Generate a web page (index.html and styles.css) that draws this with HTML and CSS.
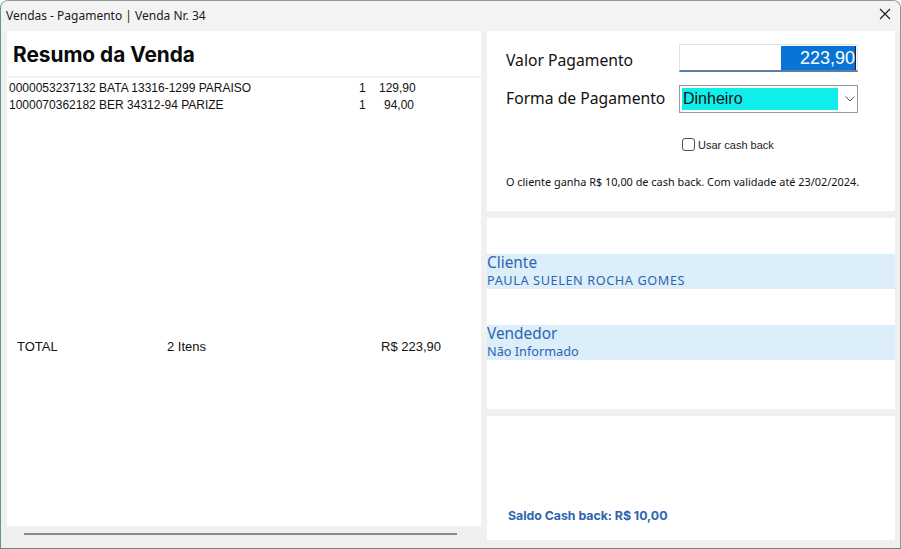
FILE: index.html
```html
<!DOCTYPE html>
<html lang="pt-BR">
<head>
<meta charset="utf-8">
<title>Vendas - Pagamento</title>
<link rel="stylesheet" href="styles.css">
</head>
<body>
<div class="window">
  <div class="titlebar">
    <span class="title">Vendas - Pagamento | Venda Nr. 34</span>
    <svg class="close" width="12" height="12" viewBox="0 0 12 12"><path d="M1 1 L11 11 M11 1 L1 11" stroke="#1a1a1a" stroke-width="1.1" fill="none"/></svg>
  </div>
  <div class="content">
    <div class="left">
      <div class="summary">
        <div class="summary-head">Resumo da Venda</div>
        <div class="items">
          <div class="item"><span class="desc">0000053237132 BATA 13316-1299 PARAISO</span><span class="qty">1</span><span class="price">129,90</span></div>
          <div class="item"><span class="desc">1000070362182 BER 34312-94 PARIZE</span><span class="qty">1</span><span class="price">94,00</span></div>
        </div>
        <div class="total">
          <span class="t-label">TOTAL</span>
          <span class="t-count">2 Itens</span>
          <span class="t-value">R$ 223,90</span>
        </div>
      </div>
      <div class="hscroll"><div class="hbar"></div></div>
    </div>
    <div class="right">
      <div class="card pay">
        <div class="row">
          <span class="lbl lbl-first">Valor Pagamento</span>
          <div class="input"><span class="sel">223,90</span></div>
        </div>
        <div class="row">
          <span class="lbl lbl-second">Forma de Pagamento</span>
          <div class="combo"><span class="combo-val">Dinheiro</span>
            <svg class="chev" width="10" height="6" viewBox="0 0 10 6"><path d="M0.5 0.5 L5 5 L9.5 0.5" stroke="#555" stroke-width="1" fill="none"/></svg>
          </div>
        </div>
        <label class="check"><span class="box"></span>Usar cash back</label>
        <p class="note">O cliente ganha R$ 10,00 de cash back. Com validade até 23/02/2024.</p>
      </div>
      <div class="card people">
        <div class="band"><div class="b-title">Cliente</div><div class="b-value caps">PAULA SUELEN ROCHA GOMES</div></div>
        <div class="band"><div class="b-title">Vendedor</div><div class="b-value">Não Informado</div></div>
      </div>
      <div class="card saldo">
        <span class="saldo-text">Saldo Cash back: R$ 10,00</span>
      </div>
    </div>
  </div>
</div>
</body>
</html>
```
FILE: styles.css
```css
* { box-sizing: border-box; }
html, body { margin: 0; padding: 0; background: #ffffff; }
body { width: 901px; height: 549px; overflow: hidden; font-family: "Noto Sans", "Open Sans", sans-serif; }

.window {
  width: 901px;
  height: 549px;
  background: #f0f0f0;
  border: 1px solid #8d9a96;
  border-left-color: #5f9c86;
  border-bottom-color: #70857f;
  border-top-left-radius: 8px;
  border-top-right-radius: 8px;
  display: flex;
  flex-direction: column;
  overflow: hidden;
}

.titlebar {
  height: 30px;
  flex: none;
  background: #f3f3f3;
  display: flex;
  align-items: center;
  justify-content: space-between;
  padding: 0 9px 1px 5px;
}
.title { font-size: 12px; color: #1a1a1a; }
.close { margin-top: -3px; }

.content {
  flex: 1;
  display: grid;
  grid-template-columns: 474px 408px;
  column-gap: 6px;
  padding: 0 0 8px 6px;
}

.left { display: flex; flex-direction: column; }
.summary {
  height: 495px;
  background: #fff;
  display: flex;
  flex-direction: column;
}
.summary-head {
  height: 47px;
  padding: 11px 0 0 6px;
  font-family: "Inter", "Noto Sans", sans-serif;
  font-weight: 700;
  font-size: 20.8px;
  color: #0a0a0a;
  border-bottom: 2px solid #f0f0f0;
}
.items { padding-top: 1px; height: 258px; }
.item {
  display: flex;
  height: 17px;
  align-items: center;
  font-family: "Liberation Sans", Arial, sans-serif;
  font-size: 12px;
  color: #111;
  padding-left: 2px;
}
.desc { width: 350px; }
.qty { width: 20px; }
.price { width: 35px; text-align: right; }

.total {
  display: flex;
  align-items: center;
  height: 20px;
  font-family: "Liberation Sans", Arial, sans-serif;
  font-size: 13px;
  color: #111;
  padding-left: 10px;
}
.t-label { width: 150px; }
.t-count { width: 214px; }

.hscroll { flex: 1; padding: 7px 0 0 17px; }
.hbar { width: 433px; height: 2px; background: #8a8a8a; }

.right { display: flex; flex-direction: column; gap: 7px; }
.card { background: #fff; }

.pay { height: 180px; padding: 13px 0 0 19px; }
.row { display: flex; align-items: center; }
.row + .row { margin-top: 13px; }
.lbl { width: 173px; font-size: 15.7px; color: #111; }
.lbl-first { padding-top: 4px; }
.lbl-second { margin-top: -3px; }
.input {
  width: 179px;
  height: 28px;
  border: 1px solid #e3e3e3;
  border-bottom: 2px solid #5b7ea6;
  display: flex;
  justify-content: flex-end;
  align-items: center;
  padding-right: 1px;
}
.sel {
  background: #0a74d6;
  color: #fff;
  font-family: "Liberation Sans", Arial, sans-serif;
  font-size: 18px;
  width: 75px;
  height: 24px;
  line-height: 24px;
  text-align: right;
  border-right: 1px solid #222;
}
.combo {
  width: 179px;
  height: 28px;
  border: 1px solid #9a9a9a;
  display: flex;
  align-items: center;
  padding: 2px;
}
.combo-val {
  width: 157px;
  height: 22px;
  background: #10eeec;
  font-family: "Liberation Sans", Arial, sans-serif;
  font-size: 16px;
  line-height: 22px;
  color: #111;
  padding-left: 1px;
}
.chev { margin-left: 7px; }

.check {
  display: flex;
  align-items: center;
  margin: 25px 0 0 176px;
  font-family: "Liberation Sans", Arial, sans-serif;
  font-size: 11px;
  color: #222;
}
.box {
  width: 13px;
  height: 13px;
  border: 1px solid #555;
  border-radius: 3px;
  margin-right: 3px;
}
.note { margin: 23px 0 0 0; font-size: 10.9px; color: #111; }

.people { height: 191px; padding-top: 36px; }
.band {
  background: #dceef9;
  height: 35px;
  color: #2d65b1;
  display: flex;
  flex-direction: column;
}
.band + .band { margin-top: 36px; }
.b-title { font-size: 15.4px; line-height: normal; margin-top: -2px; }
.b-value { font-size: 12.7px; line-height: normal; margin-top: -2px; }
.caps { letter-spacing: 0.6px; }

.saldo { height: 124px; display: flex; align-items: flex-end; padding: 0 0 17px 21px; }
.saldo-text { font-family: "Inter", "Noto Sans", sans-serif; font-weight: 700; font-size: 12.3px; color: #2d65b1; }
```
